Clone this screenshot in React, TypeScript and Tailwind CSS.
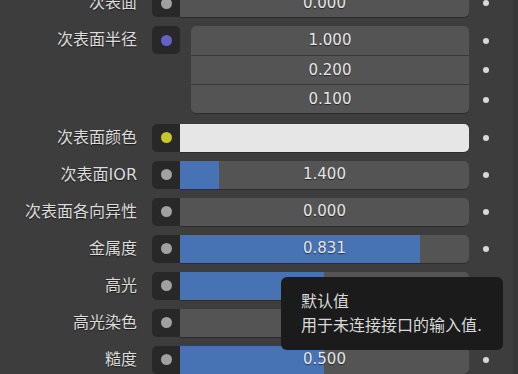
import React from 'react'

const font = "font-['DejaVu_Sans','Noto_Sans_CJK_SC',sans-serif]"
const shadow = '[text-shadow:0_1px_1px_rgba(0,0,0,0.55)]'

const Socket = ({ color, alone }: { color: string; alone?: boolean }) => (
  <div
    className={`flex h-[28px] w-[28px] shrink-0 items-center justify-center bg-[#282828] ${
      alone ? 'rounded-[5px]' : 'rounded-l-[5px]'
    }`}
  >
    <div className="h-[11px] w-[11px] rounded-full" style={{ background: color }} />
  </div>
)

const Decorator = () => (
  <div className="ml-[14px] h-[6px] w-[6px] shrink-0 rounded-full bg-[#d9d9d9]" />
)

const Label = ({ text }: { text: string }) => (
  <div className={`w-[137px] shrink-0 text-right text-[16px] text-[#dcdcdc] ${shadow}`}>{text}</div>
)

const ValueRow = ({
  label,
  value,
  fill = 0
}: {
  label: string
  value: string
  fill?: number
}) => (
  <div className="flex h-[28px] items-center">
    <Label text={label} />
    <div className="ml-[15px] flex">
      <Socket color="#a1a1a1" />
      <div className="relative flex h-[28px] w-[289px] items-center justify-center overflow-hidden rounded-r-[5px] bg-[#545454] shadow-[0_1px_0_rgba(0,0,0,0.25)]">
        {fill > 0 && (
          <div className="absolute left-0 top-0 h-full bg-[#4772b3]" style={{ width: fill }} />
        )}
        <span className={`relative text-[15px] text-[#e6e6e6] ${shadow}`}>{value}</span>
      </div>
    </div>
    <Decorator />
  </div>
)

const App = () => {
  return (
    <div className={`relative flex h-[374px] w-[518px] overflow-hidden bg-[#3d3d3d] ${font}`}>
      <div className="flex flex-1 flex-col gap-[9px] mt-[-11px]">
        <ValueRow label="次表面" value="0.000" />

        <div className="flex items-start">
          <div className="flex h-[28px] items-center">
            <Label text="次表面半径" />
          </div>
          <div className="ml-[15px]">
            <Socket color="#6363c7" alone />
          </div>
          <div className="ml-[11px] flex w-[278px] flex-col gap-px overflow-hidden rounded-[5px] bg-[#3a3a3a] shadow-[0_1px_0_rgba(0,0,0,0.25)]">
            {['1.000', '0.200', '0.100'].map((v, i) => (
              <div
                key={v}
                className={`flex items-center justify-center bg-[#545454] text-[15px] text-[#e6e6e6] ${shadow} ${
                  i === 0 ? 'h-[29px]' : 'h-[28px]'
                }`}
              >
                {v}
              </div>
            ))}
          </div>
          <div className="flex flex-col">
            {[0, 1, 2].map(i => (
              <div key={i} className="flex h-[29.5px] items-center">
                <Decorator />
              </div>
            ))}
          </div>
        </div>

        <div className="flex h-[28px] items-center">
          <Label text="次表面颜色" />
          <div className="ml-[15px] flex">
            <Socket color="#c7c729" />
            <div className="h-[28px] w-[289px] rounded-r-[5px] bg-[#e6e6e6] shadow-[0_1px_0_rgba(0,0,0,0.25)]" />
          </div>
          <Decorator />
        </div>

        <ValueRow label="次表面IOR" value="1.400" fill={39} />
        <ValueRow label="次表面各向异性" value="0.000" />
        <ValueRow label="金属度" value="0.831" fill={240} />
        <ValueRow label="高光" value="0.500" fill={144} />
        <ValueRow label="高光染色" value="0.000" />
        <ValueRow label="糙度" value="0.500" fill={144} />
      </div>
      <div className="w-[5px] shrink-0 bg-[#373737]" />

      <div className="absolute left-[281px] top-[277px] flex h-[73px] w-[222px] flex-col justify-center rounded-[6px] bg-[#1b1b1b] pl-[20px] text-[16px] leading-[24px] text-[#d9d9d9]">
        <div>默认值</div>
        <div>用于未连接接口的输入值.</div>
      </div>
    </div>
  )
}

export default App
